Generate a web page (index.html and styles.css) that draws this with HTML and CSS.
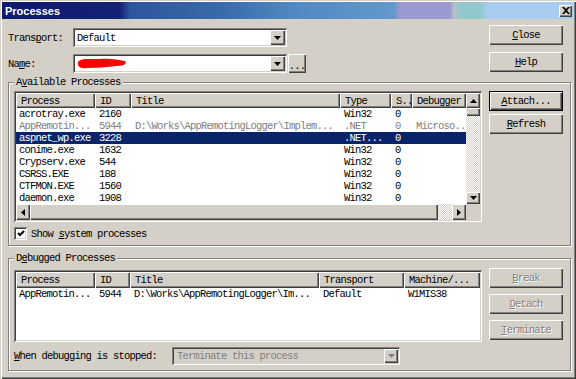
FILE: index.html
```html
<!DOCTYPE html>
<html lang="en">
<head>
  <meta charset="UTF-8" />
  <title>Processes</title>
  <link rel="stylesheet" href="styles.css">
</head>
<body>
  <div class="window">

    <!-- Title bar -->
    <div class="titlebar">
      <span class="title">Processes</span>
      <span class="title-close">
        <svg width="8" height="7" viewBox="0 0 8 7"><path d="M0 0H2L4 2L6 0H8L5 3.5L8 7H6L4 5L2 7H0L3 3.5Z" fill="#000"/></svg>
      </span>
    </div>

    <!-- Transport / Name -->
    <div class="top">
      <div class="fields">
        <div class="field">
          <span class="field-label">Trans<u>p</u>ort:</span>
          <div class="combo">
            <span class="combo-text">Default</span>
            <span class="drop"><svg width="7" height="4" viewBox="0 0 7 4"><path d="M0 0H7L3.5 4Z" fill="#000"/></svg></span>
          </div>
        </div>
        <div class="field">
          <span class="field-label">Na<u>m</u>e:</span>
          <div class="combo">
            <span class="combo-text">
              <svg class="scribble" width="50" height="11" viewBox="0 0 50 11"><path d="M1 4C3 0 12 1 22 1C32 0 42 2 48 3C50 5 48 8 40 8C30 9 20 10 10 10C3 11 0 8 1 4Z" fill="#f00"/></svg>
            </span>
            <span class="drop"><svg width="7" height="4" viewBox="0 0 7 4"><path d="M0 0H7L3.5 4Z" fill="#000"/></svg></span>
          </div>
          <button class="btn btn-dots">...</button>
        </div>
      </div>
      <div class="side side-top">
        <button class="btn"><u>C</u>lose</button>
        <button class="btn"><u>H</u>elp</button>
      </div>
    </div>

    <!-- Available Processes -->
    <fieldset class="group group-avail">
      <legend>A<u>v</u>ailable Processes</legend>
      <div class="group-main">
        <div class="listview lv-avail">
          <div class="lv-header cols-avail">
            <span>Process</span><span>ID</span><span>Title</span><span>Type</span><span>S..</span><span>Debugger</span>
          </div>
          <div class="vscroll">
            <span class="sb-btn sb-up"><svg width="7" height="4" viewBox="0 0 7 4"><path d="M0 4H7L3.5 0Z" fill="#000"/></svg></span>
            <span class="sb-thumb"></span>
            <span class="sb-track"></span>
            <span class="sb-btn sb-down"><svg width="7" height="4" viewBox="0 0 7 4"><path d="M0 0H7L3.5 4Z" fill="#000"/></svg></span>
          </div>
          <div class="lv-body">
            <div class="lv-row cols-avail"><span>acrotray.exe</span><span>2160</span><span></span><span>Win32</span><span>0</span><span></span></div>
            <div class="lv-row cols-avail grey"><span>AppRemotin...</span><span>5944</span><span>D:\Works\AppRemotingLogger\Implem...</span><span>.NET</span><span>0</span><span>Microso..</span></div>
            <div class="lv-row cols-avail selected"><span>aspnet_wp.exe</span><span>3228</span><span></span><span>.NET...</span><span>0</span><span></span></div>
            <div class="lv-row cols-avail"><span>conime.exe</span><span>1632</span><span></span><span>Win32</span><span>0</span><span></span></div>
            <div class="lv-row cols-avail"><span>Crypserv.exe</span><span>544</span><span></span><span>Win32</span><span>0</span><span></span></div>
            <div class="lv-row cols-avail"><span>CSRSS.EXE</span><span>188</span><span></span><span>Win32</span><span>0</span><span></span></div>
            <div class="lv-row cols-avail"><span>CTFMON.EXE</span><span>1560</span><span></span><span>Win32</span><span>0</span><span></span></div>
            <div class="lv-row cols-avail"><span>daemon.exe</span><span>1908</span><span></span><span>Win32</span><span>0</span><span></span></div>
          </div>
          <div class="hscroll">
            <span class="sb-btn sb-side"><svg width="4" height="7" viewBox="0 0 4 7"><path d="M4 0V7L0 3.5Z" fill="#000"/></svg></span>
            <span class="sb-thumb sb-hthumb"></span>
            <span class="sb-track"></span>
            <span class="sb-btn sb-side"><svg width="4" height="7" viewBox="0 0 4 7"><path d="M0 0V7L4 3.5Z" fill="#000"/></svg></span>
          </div>
          <div class="corner"></div>
        </div>
        <div class="side side-avail">
          <button class="btn btn-default"><u>A</u>ttach...</button>
          <button class="btn"><u>R</u>efresh</button>
        </div>
      </div>
      <label class="check">
        <span class="checkbox"><svg width="8" height="7" viewBox="0 0 8 7"><path d="M1 3L3 5L7 1" stroke="#000" stroke-width="2" fill="none"/></svg></span>
        <span>Show <u>s</u>ystem processes</span>
      </label>
    </fieldset>

    <!-- Debugged Processes -->
    <fieldset class="group group-debug">
      <legend>D<u>e</u>bugged Processes</legend>
      <div class="group-main">
        <div class="listview lv-debug">
          <div class="lv-header cols-debug">
            <span>Process</span><span>ID</span><span>Title</span><span>Transport</span><span>Machine/...</span>
          </div>
          <div class="lv-body">
            <div class="lv-row cols-debug"><span>AppRemotin...</span><span>5944</span><span>D:\Works\AppRemotingLogger\Im...</span><span>Default</span><span>W1MIS38</span></div>
          </div>
        </div>
        <div class="side side-debug">
          <button class="btn" disabled><u>B</u>reak</button>
          <button class="btn" disabled><u>D</u>etach</button>
          <button class="btn" disabled><u>T</u>erminate</button>
        </div>
      </div>
      <div class="stop-row">
        <span class="stop-label"><u>W</u>hen debugging is stopped:</span>
        <div class="combo combo-disabled">
          <span class="combo-text">Terminate this process</span>
          <span class="drop"><svg width="7" height="4" viewBox="0 0 7 4"><path d="M0 0H7L3.5 4Z" fill="#808080"/></svg></span>
        </div>
      </div>
    </fieldset>

  </div>
</body>
</html>
```

FILE: styles.css
```css
* {
  box-sizing: border-box;
}

body {
  margin: 0;
  background: #d4d0c8;
  color: #000;
  font: 10.5px/12px "Liberation Mono", "DejaVu Sans Mono", monospace;
  letter-spacing: -0.8px;
}

/* Window frame */
.window {
  width: 576px;
  height: 379px;
  padding: 2px 3px 3px 2px;
  background: #d4d0c8;
  box-shadow: inset 1px 1px #d4d0c8, inset 2px 2px #fff,
              inset -1px -1px #404040, inset -2px -2px #808080;
}

.titlebar {
  height: 17px;
  display: flex;
  align-items: center;
  justify-content: space-between;
  padding: 0 1px 0 3px;
  background: linear-gradient(90deg,
    #0e1a6e 0, #142276 118px, #2d559c 128px, #3a6aaa 220px,
    #5088c4 290px, #6498cc 392px, #9a9ad0 398px, #9a9ad0 448px,
    #b8c0c8 452px, #92c8cc 458px, #92c8cc 478px, #a8ccf0 486px, #a8ccf0 100%);
}

.title {
  font: bold 11px "Liberation Sans", Arial, sans-serif;
  letter-spacing: 0;
  color: #fff;
}

.title-close {
  width: 13px;
  height: 12px;
  display: flex;
  align-items: center;
  justify-content: center;
  background: #d4d0c8;
  box-shadow: inset 1px 1px #fff, inset -1px -1px #404040, inset -2px -2px #808080;
}

/* Raised / sunken pieces */
.btn,
.sb-btn,
.sb-thumb,
.drop {
  background: #d4d0c8;
  box-shadow: inset 1px 1px #fff, inset -1px -1px #404040, inset -2px -2px #808080;
}

.btn {
  width: 74px;
  height: 20px;
  padding: 0;
  border: none;
  font: inherit;
  letter-spacing: inherit;
  color: #000;
}

.btn:disabled {
  color: #808080;
  text-shadow: 1px 1px #fff;
}

.btn-default {
  border: 1px solid #000;
}

.btn-dots {
  width: 18px;
  height: 19px;
  margin-left: 1px;
  padding-top: 4px;
}

/* Top area */
.top {
  height: 57px;
  display: flex;
  justify-content: space-between;
  padding: 6px 10px 0 6px;
}

.fields {
  padding-top: 3px;
  display: flex;
  flex-direction: column;
  gap: 7px;
}

.field {
  display: flex;
  align-items: center;
}

.field-label {
  width: 65px;
}

.combo {
  width: 214px;
  height: 19px;
  padding: 2px;
  display: flex;
  align-items: center;
  background: #fff;
  box-shadow: inset 1px 1px #808080, inset -1px -1px #fff,
              inset 2px 2px #404040, inset -2px -2px #d4d0c8;
}

.combo-text {
  flex: 1;
  padding-left: 2px;
  display: flex;
  align-items: center;
}

.drop {
  width: 15px;
  height: 15px;
  display: flex;
  align-items: center;
  justify-content: center;
}

.scribble {
  display: block;
}

.combo-disabled {
  width: 228px;
  height: 18px;
  background: #d4d0c8;
  color: #808080;
}

.combo-disabled .combo-text {
  padding-left: 3px;
}

.combo-disabled .drop {
  width: 14px;
  height: 14px;
}

.side {
  display: flex;
  flex-direction: column;
}

.side-top {
  gap: 7px;
}

.side-avail {
  gap: 3px;
}

.side-debug {
  gap: 6px;
}

/* Group boxes */
.group {
  width: 563px;
  margin: 0 0 0 6px;
  padding: 3px 7px 5px 5px;
  border: 1px solid #808080;
  box-shadow: inset 1px 1px #fff, 1px 1px #fff;
  min-inline-size: 0;
}

.group legend {
  padding: 0 2px;
  line-height: 12px;
  background: #d4d0c8;
}

.group-debug {
  margin-top: 6px;
  padding-top: 4px;
}

.group-main {
  display: flex;
  align-items: flex-start;
  gap: 7px;
}

/* List views */
.listview {
  width: 468px;
  padding: 2px;
  display: grid;
  grid-template-columns: 450px 14px;
  background: #fff;
  box-shadow: inset 1px 1px #808080, inset -1px -1px #fff,
              inset 2px 2px #404040, inset -2px -2px #d4d0c8;
}

.lv-avail {
  grid-template-rows: 15px 96px 16px;
}

.lv-debug {
  margin-top: 2px;
  grid-template-columns: 464px;
  grid-template-rows: 16px 52px;
}

.lv-avail .lv-header { grid-area: 1 / 1; }
.lv-avail .vscroll { grid-area: 1 / 2 / 3 / 3; }
.lv-avail .lv-body { grid-area: 2 / 1; }
.lv-avail .hscroll { grid-area: 3 / 1; }
.lv-avail .corner { grid-area: 3 / 2; }

.cols-avail {
  grid-template-columns: 79px 36px 209px 51px 21px 54px;
}

.cols-debug {
  grid-template-columns: 79px 35px 189px 85px 76px;
}

.lv-header {
  display: grid;
}

.lv-header span {
  padding-left: 5px;
  white-space: nowrap;
  overflow: hidden;
  display: flex;
  align-items: center;
  background: #d4d0c8;
  box-shadow: inset 1px 1px #fff, inset -1px -1px #404040, inset -2px -2px #808080;
}

.lv-row {
  display: grid;
  height: 12px;
}

.lv-row span {
  padding-left: 4px;
  white-space: nowrap;
  overflow: hidden;
}

.lv-row span:first-child {
  padding-left: 3px;
}

.lv-row.grey {
  color: #808080;
}

.lv-row.selected {
  background: #0a246a;
  color: #fff;
}

/* Scroll bars */
.vscroll {
  display: flex;
  flex-direction: column;
}

.hscroll {
  display: flex;
}

.sb-btn {
  display: flex;
  align-items: center;
  justify-content: center;
}

.sb-up {
  height: 15px;
}

.sb-down {
  height: 12px;
}

.sb-thumb {
  height: 8px;
}

.sb-side {
  width: 14px;
}

.sb-hthumb {
  width: 408px;
  height: 16px;
}

.sb-track {
  flex: 1;
  background: repeating-conic-gradient(#d4d0c8 0 25%, #fff 0 50%) 0 0 / 2px 2px;
}

.corner {
  background: #d4d0c8;
}

/* Checkbox row */
.check {
  margin-top: 5px;
  height: 13px;
  display: flex;
  align-items: center;
  gap: 4px;
}

.checkbox {
  width: 13px;
  height: 13px;
  display: flex;
  align-items: center;
  justify-content: center;
  background: #fff;
  box-shadow: inset 1px 1px #808080, inset -1px -1px #fff,
              inset 2px 2px #404040, inset -2px -2px #d4d0c8;
}

/* Bottom row */
.stop-row {
  margin-top: 5px;
  display: flex;
  align-items: center;
}

.stop-label {
  width: 158px;
}
```
